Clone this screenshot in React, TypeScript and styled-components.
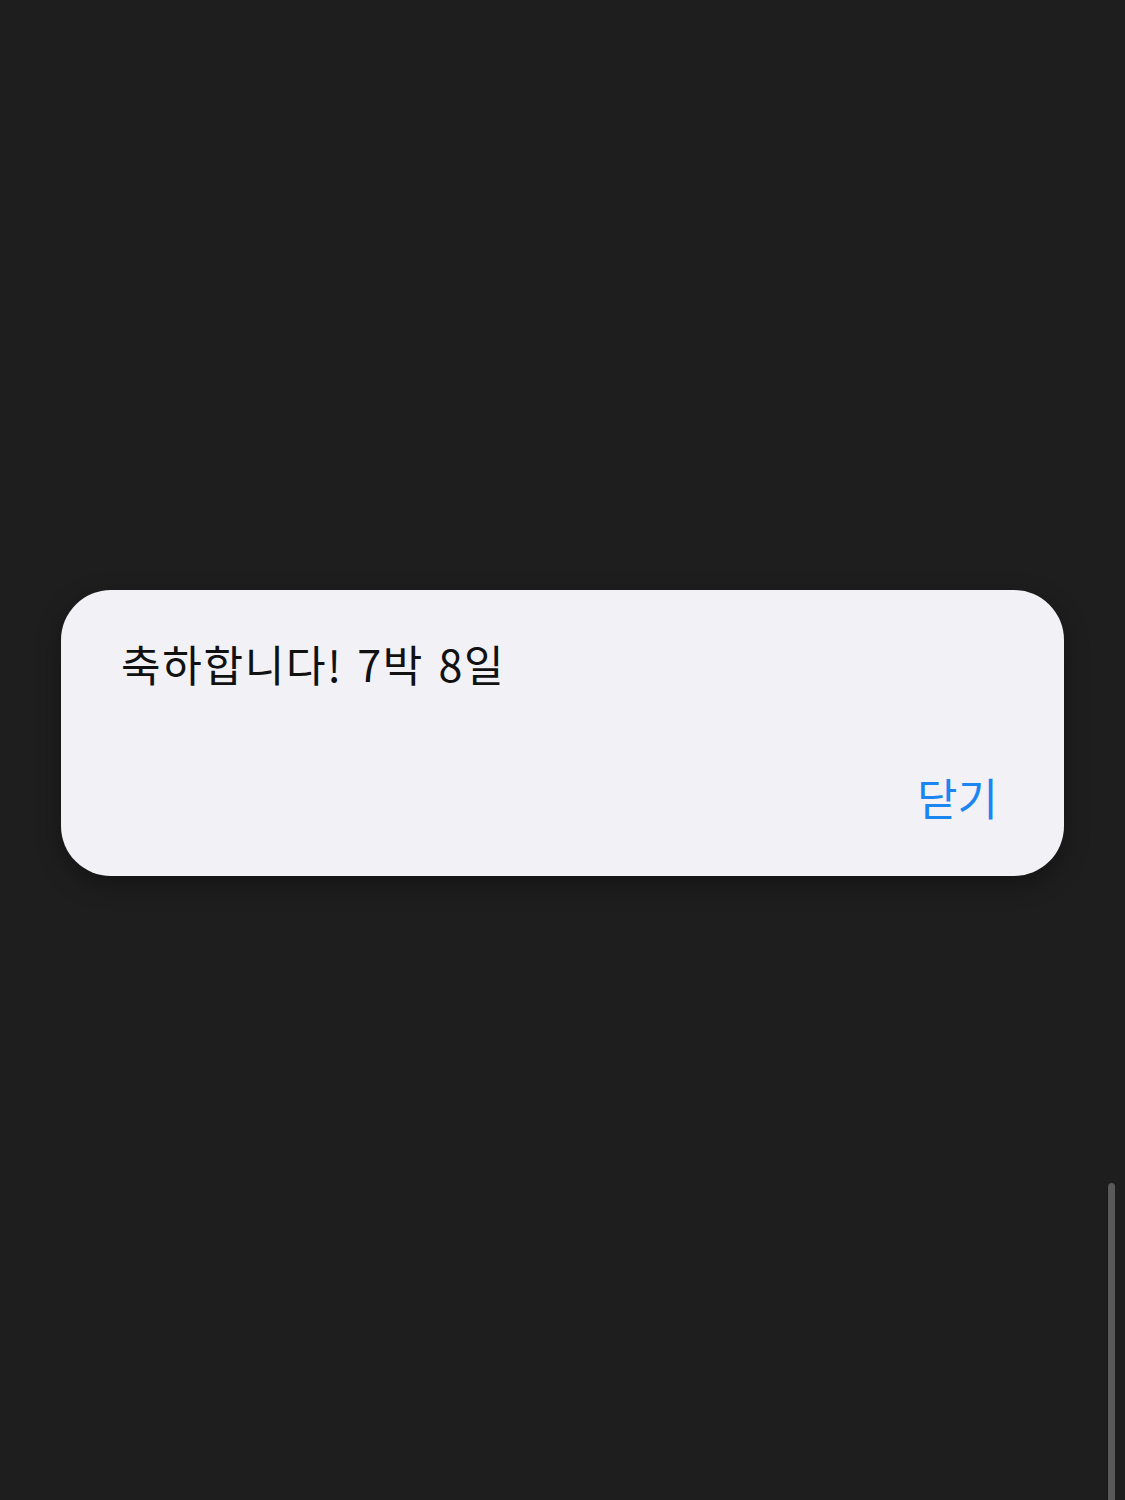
import React from "react";
import styled, { createGlobalStyle } from "styled-components";

const Global = createGlobalStyle`
  html, body { margin: 0; padding: 0; background: #1e1e1e; }
  body { font-family: "Noto Sans CJK KR", "Noto Sans", sans-serif; }
`;

const Screen = styled.div`
  position: relative;
  width: 1125px;
  height: 1500px;
  background: #1e1e1e;
  display: flex;
  flex-direction: column;
  padding: 590px 61px 0 61px;
  box-sizing: border-box;
  overflow: hidden;
`;

const Dialog = styled.div`
  width: 1003px;
  height: 286px;
  box-sizing: border-box;
  background: #f1f1f6;
  border-radius: 50px;
  box-shadow: 0 8px 24px rgba(0, 0, 0, 0.35);
  display: flex;
  flex-direction: column;
  justify-content: space-between;
  padding: 38px 66px 49px 60px;
`;

const Message = styled.div`
  font-family: "Noto Sans CJK KR", sans-serif;
  font-size: 43px;
  line-height: 70px;
  color: #111;
  letter-spacing: 1.7px;
  word-spacing: 3px;
`;

const Actions = styled.div`
  display: flex;
  justify-content: flex-end;
`;

const CloseButton = styled.button`
  border: none;
  background: none;
  padding: 0;
  font-family: "Noto Sans CJK KR", sans-serif;
  font-size: 44px;
  line-height: 60px;
  color: #1b86f2;
  cursor: pointer;
`;

const ScrollThumb = styled.div`
  position: absolute;
  right: 10px;
  top: 1183px;
  bottom: -10px;
  width: 7px;
  border-radius: 4px;
  background: #5a5a5a;
  box-shadow: -1px 0 0 #181818;
`;

export default function App() {
  return (
    <>
      <Global />
      <Screen>
        <Dialog>
          <Message>축하합니다! 7박 8일</Message>
          <Actions>
            <CloseButton>닫기</CloseButton>
          </Actions>
        </Dialog>
        <ScrollThumb />
      </Screen>
    </>
  );
}
